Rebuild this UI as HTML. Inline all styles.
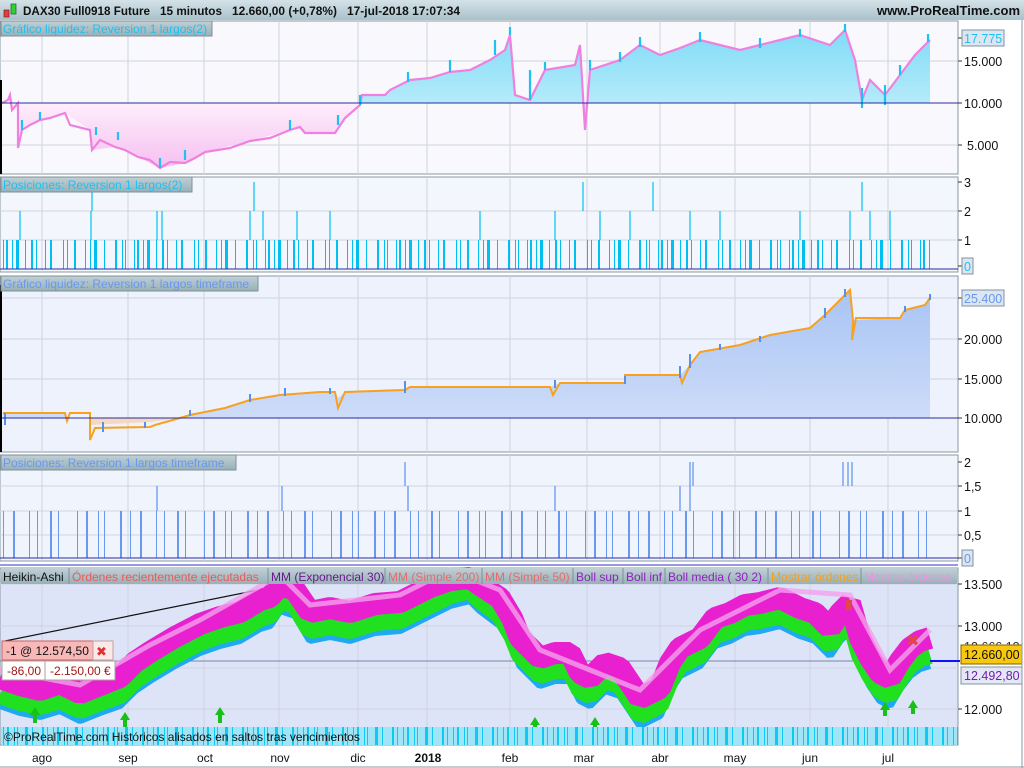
<!DOCTYPE html>
<html><head><meta charset="utf-8"><style>
html,body{margin:0;padding:0;background:#fff;}
svg{display:block;font-family:"Liberation Sans",sans-serif;}
</style></head><body>
<svg width="1024" height="768" viewBox="0 0 1024 768" xmlns="http://www.w3.org/2000/svg">
<defs>
<linearGradient id="tb" x1="0" y1="0" x2="0" y2="1"><stop offset="0" stop-color="#d4e2e8"/><stop offset="1" stop-color="#a9c1cb"/></linearGradient>
<linearGradient id="hd" x1="0" y1="0" x2="0" y2="1"><stop offset="0" stop-color="#c0d0d6"/><stop offset="1" stop-color="#98b0b8"/></linearGradient>
<linearGradient id="cy" x1="0" y1="0" x2="0" y2="1"><stop offset="0" stop-color="#80dcf6"/><stop offset="1" stop-color="#c8f0fc"/></linearGradient>
<linearGradient id="pk" x1="0" y1="0" x2="0" y2="1"><stop offset="0" stop-color="#fdeefc"/><stop offset="1" stop-color="#f6c0f0"/></linearGradient>
<linearGradient id="bl" x1="0" y1="0" x2="0" y2="1"><stop offset="0" stop-color="#a8c4f4"/><stop offset="1" stop-color="#cddcf8"/></linearGradient>
</defs>
<rect width="1024" height="768" fill="#ffffff"/>
<!-- top bar -->
<rect x="0" y="0" width="1024" height="20" fill="url(#tb)"/>
<rect x="4" y="10" width="5" height="7" fill="#e04040" stroke="#802020" stroke-width="0.7"/>
<rect x="11" y="4" width="5" height="10" fill="#30d030" stroke="#206020" stroke-width="0.7"/>
<g font-size="12" font-weight="bold" fill="#111">
<text x="23" y="15" textLength="127" lengthAdjust="spacingAndGlyphs">DAX30 Full0918 Future</text>
<text x="160" y="15" textLength="62" lengthAdjust="spacingAndGlyphs">15 minutos</text>
<text x="232" y="15" textLength="105" lengthAdjust="spacingAndGlyphs">12.660,00 (+0,78%)</text>
<text x="347" y="15" textLength="113" lengthAdjust="spacingAndGlyphs">17-jul-2018 17:07:34</text>
</g>
<text x="1020" y="15" font-size="13" font-weight="bold" fill="#111" text-anchor="end">www.ProRealTime.com</text>

<!-- panel backgrounds -->
<rect x="0" y="21" width="958" height="153" fill="#f9f9fd" stroke="#8898a4"/>
<rect x="0" y="177" width="958" height="95" fill="#f4f6fd" stroke="#8898a4"/>
<rect x="0" y="276" width="958" height="176" fill="#eef2fd" stroke="#8898a4"/>
<rect x="0" y="455" width="958" height="106" fill="#f0f4fd" stroke="#8898a4"/>
<rect x="0" y="568" width="958" height="177" fill="#dde4f8" stroke="#8898a4"/>
<line x1="0" y1="565" x2="958" y2="565" stroke="#3030d0"/>

<!-- vertical grid -->
<g stroke="#cfd3e0" stroke-width="1">
<path d="M42 21V174M128 21V174M204 21V174M279 21V174M358 21V174M427 21V174M510 21V174M587 21V174M660 21V174M735 21V174M810 21V174M888 21V174"/>
<path d="M42 177V272M128 177V272M204 177V272M279 177V272M358 177V272M427 177V272M510 177V272M587 177V272M660 177V272M735 177V272M810 177V272M888 177V272"/>
<path d="M42 276V452M128 276V452M204 276V452M279 276V452M358 276V452M427 276V452M510 276V452M587 276V452M660 276V452M735 276V452M810 276V452M888 276V452"/>
<path d="M42 455V561M128 455V561M204 455V561M279 455V561M358 455V561M427 455V561M510 455V561M587 455V561M660 455V561M735 455V561M810 455V561M888 455V561"/>
<path d="M42 568V745M128 568V745M204 568V745M279 568V745M358 568V745M427 568V745M510 568V745M587 568V745M660 568V745M735 568V745M810 568V745M888 568V745"/>
<path d="M0 61H958M0 145H958M0 211H958M0 240H958M0 339H958M0 379H958M0 298H958M0 486H958M0 511H958M0 535H958M0 584H958M0 626H958M0 709H958M0 668H958"/>
</g>

<!-- panel 1 -->
<path d="M2 103L8 103L18 103L18 148L22 130L40 120L65 113L90 130L92 150L115 147L138 157L160 168L185 163L205 152L250 141L290 130L300 127L305 133L335 133L345 118L360 105L362 103Z" fill="url(#pk)"/>
<path d="M362 103L362 95L385 95L390 90L410 80L430 78L450 72L470 70L490 60L505 50L510 35L515 95L530 100L545 70L575 65L580 45L585 130L590 70L620 60L640 45L660 55L700 40L740 50L780 40L800 35L830 45L845 30L855 60L862 100L870 80L885 95L900 75L915 55L930 40L930 103Z" fill="url(#cy)"/>
<polyline fill="none" stroke="#f080e0" stroke-width="2.2" points="2,103 8,100 10,95 12,110 18,103 18,148 22,130 30,125 40,120 50,118 65,113 70,125 90,130 92,150 100,140 115,147 125,150 138,157 150,160 160,168 170,162 185,163 195,158 205,152 230,148 250,141 270,138 290,130 300,127 305,133 335,133 345,118 360,105 362,95 385,95 390,90 410,80 430,78 450,72 470,70 490,60 505,50 510,35 515,95 530,100 545,70 575,65 580,45 585,130 590,70 620,60 640,45 660,55 680,48 700,40 720,45 740,50 760,45 780,40 800,35 830,45 845,30 855,60 862,100 870,80 885,95 900,75 915,55 930,40"/>
<g stroke="#20c0f0" stroke-width="2.2" fill="none"><path d="M22 130v-10M40 120v-8M96 135v-8M118 140v-8M160 168v-10M185 160v-10M290 130v-10M338 125v-10M360 105v-10M408 82v-10M450 72v-12M495 55v-15M510 35v-8M530 100v-30M545 70v-8M590 70v-10M620 62v-10M640 47v-10M700 42v-10M760 48v-10M800 37v-8M845 32v-8M862 108v-20M885 105v-20M900 75v-10M928 42v-8"/></g>
<line x1="0" y1="103" x2="958" y2="103" stroke="#2a2aa0"/>
<line x1="1" y1="80" x2="1" y2="174" stroke="#000" stroke-width="2"/>

<!-- panel 2 bars -->
<line x1="3" y1="254.5" x2="930" y2="254.5" stroke="#00c0f0" stroke-width="29" stroke-dasharray="1 2 2 4 1 3 3 6 1 5 2 3 1 8 1 4 2 11 1 3 1 6 2 9 1 4 1 3 3 7 1 10 2 5 1 2 1 8"/>
<g stroke="#00c0f0" stroke-width="1.2"><path d="M20 240V211M91 240V211M157 240V211M162 240V211M250 240V211M263 240V211M297 240V211M330 240V211M480 240V211M555 240V211M600 240V211M630 240V211M690 240V211M720 240V211M800 240V211M850 240V211M870 240V211M890 240V211M92 211V182M254 211V182M583 211V182M653 211V182M862 211V182"/></g>
<line x1="0" y1="269" x2="958" y2="269" stroke="#2a2aa0"/>

<!-- panel 3 -->
<path d="M3 418L3 413L65 413L65 418Z" fill="#cddcf8"/>
<path d="M90 418L90 425L150 422L180 418Z" fill="#f4d8c0"/>
<path d="M180 418L190 415L225 408L250 400L280 395L320 392L335 392L338 398L345 392L405 390L410 387L550 387L560 383L625 383L625 375L680 375L690 365L700 352L740 345L770 335L810 328L825 315L845 295L850 290L853 320L900 318L905 310L925 305L930 298L930 418Z" fill="url(#bl)"/>
<polyline fill="none" stroke="#f8a020" stroke-width="2" points="3,413 65,413 67,421 70,413 90,413 90,440 95,428 150,427 155,425 180,418 190,415 225,408 250,400 280,395 320,392 335,392 338,408 345,392 405,390 410,387 550,387 553,395 560,383 625,383 625,375 680,375 682,383 690,365 700,352 740,345 770,335 810,328 825,315 845,295 850,290 853,320 852,340 856,318 900,318 905,310 925,305 930,298"/>
<g stroke="#5890e8" stroke-width="2" fill="none"><path d="M5 425v-12M103 432v-10M145 428v-6M190 416v-6M250 402v-8M285 396v-8M330 394v-6M405 393v-12M555 388v-8M625 384v-8M680 378v-12M690 368v-14M720 350v-6M760 342v-6M825 318v-10M845 297v-8M905 312v-6M930 300v-6"/></g>
<line x1="0" y1="418" x2="958" y2="418" stroke="#2a2aa0"/>
<line x1="1" y1="285" x2="1" y2="452" stroke="#000" stroke-width="2"/>

<!-- panel 4 bars -->
<line x1="3" y1="534.5" x2="930" y2="534.5" stroke="#6898f0" stroke-width="47" stroke-dasharray="1 9 2 14 1 7 1 12 2 6 1 18 1 8 2 10 1 5 1 15 2 8"/>
<g stroke="#6898f0" stroke-width="1.3"><path d="M157 511V486M282 511V486M408 511V486M555 511V486M680 511V486M690 511V486M405 486V462M690 486V462M693 486V462M843 486V462M848 486V462M852 486V462"/></g>
<line x1="0" y1="558" x2="958" y2="558" stroke="#2a2aa0"/>

<!-- panel 5 price -->
<line x1="0" y1="661" x2="958" y2="661" stroke="#7888a8"/>
<line x1="5" y1="641" x2="278" y2="586" stroke="#111" stroke-width="1.2"/>
<polyline fill="none" stroke="#20a8f0" stroke-width="8" stroke-linejoin="bevel" points="0,705 20,712 40,716 60,710 80,720 100,712 120,705 135,690 150,680 175,665 200,652 220,645 240,640 260,628 270,625 280,610 295,615 310,640 330,636 350,640 375,632 400,630 420,620 430,615 450,605 470,600 480,610 500,625 512,645 520,665 540,685 555,680 570,680 580,700 590,705 605,690 620,695 640,725 660,715 670,690 680,675 700,665 715,645 730,640 745,632 760,630 780,625 800,635 815,640 830,655 840,640 850,630 860,665 870,685 880,700 890,705 900,688 910,675 920,668 930,665"/>
<polyline fill="none" stroke="#20e020" stroke-width="18" stroke-linejoin="bevel" points="0,695 20,702 40,706 60,700 80,710 100,702 120,695 135,680 150,670 175,655 200,642 220,635 240,630 260,618 270,615 280,600 295,605 310,630 330,626 350,630 375,622 400,620 420,610 430,605 450,595 470,590 480,600 500,615 512,635 520,655 540,675 555,670 570,670 580,690 590,695 605,680 620,685 640,715 660,705 670,680 680,665 700,655 715,635 730,630 745,622 760,620 780,615 800,625 815,630 830,645 840,630 850,620 860,655 870,675 880,690 890,695 900,678 910,665 920,658 930,655"/>
<polyline fill="none" stroke="#e820d0" stroke-width="22" stroke-linejoin="bevel" points="0,678 20,685 40,690 60,683 80,693 100,685 120,677 135,662 150,652 175,637 200,624 220,617 240,612 260,600 270,597 280,585 295,590 310,612 330,608 350,612 375,604 400,602 420,592 430,587 450,580 470,578 480,585 500,598 512,618 520,638 540,658 555,653 570,653 580,673 590,678 605,663 620,668 640,698 660,688 670,663 680,648 700,638 715,618 730,613 745,605 760,603 780,598 800,608 815,613 830,628 840,613 850,603 860,638 870,658 880,673 890,678 900,661 910,648 920,641 930,638"/>
<polyline fill="none" stroke="#f4a0ec" stroke-width="5" opacity="0.8" points="0,670 80,685 150,645 200,620 280,575 310,605 400,595 450,570 500,590 540,650 590,670 640,690 700,630 780,590 850,595 890,670 930,630"/>
<g fill="#18c018"><path d="M30 715l5 -8 5 8h-3v8h-4v-8z"/><path d="M120 720l5 -8 5 8h-3v8h-4v-8z"/><path d="M215 715l5 -8 5 8h-3v8h-4v-8z"/><path d="M530 725l5 -8 5 8h-3v8h-4v-8z"/><path d="M590 725l5 -8 5 8h-3v8h-4v-8z"/><path d="M908 708l5 -8 5 8h-3v6h-4v-6z"/><path d="M880 710l5 -8 5 8h-3v6h-4v-6z"/></g>
<text x="906" y="646" font-size="16" fill="#e04848">✖</text>
<rect x="846" y="600" width="6" height="10" fill="#e04848"/>

<!-- bottom strip -->
<rect x="1" y="727" width="957" height="18" fill="#a0e4f8"/>
<line x1="3" y1="736" x2="958" y2="736" stroke="#10c8f0" stroke-width="18" stroke-dasharray="1 3 2 5 1 2 1 7 3 4 1 9 2 3 1 5"/>
<text x="4" y="741" font-size="12" fill="#111">©ProRealTime.com  Históricos alisados en saltos tras vencimientos</text>

<!-- headers -->
<rect x="1" y="21" width="211" height="15" fill="url(#hd)" stroke="#809098"/>
<text x="3" y="33" font-size="12" fill="#20c0f0">Gráfico liquidez: Reversion 1 largos(2)</text>
<rect x="1" y="177" width="191" height="15" fill="url(#hd)" stroke="#809098"/>
<text x="3" y="189" font-size="12" fill="#20c0f0">Posiciones: Reversion 1 largos(2)</text>
<rect x="1" y="276" width="257" height="15" fill="url(#hd)" stroke="#809098"/>
<text x="3" y="288" font-size="12" fill="#6898f0">Gráfico liquidez: Reversion 1 largos timeframe</text>
<rect x="1" y="455" width="235" height="15" fill="url(#hd)" stroke="#809098"/>
<text x="3" y="467" font-size="12" fill="#6898f0">Posiciones: Reversion 1 largos timeframe</text>
<rect x="1" y="568" width="956" height="16" fill="url(#hd)"/>
<g font-size="12">
<text x="3" y="581" fill="#111">Heikin-Ashi</text><line x1="69" y1="568" x2="69" y2="584" stroke="#809098"/>
<text x="72" y="581" fill="#e85a5a">Órdenes recientemente ejecutadas</text><line x1="268" y1="568" x2="268" y2="584" stroke="#809098"/>
<text x="271" y="581" fill="#6a1a8a">MM (Exponencial 30)</text><line x1="385" y1="568" x2="385" y2="584" stroke="#809098"/>
<text x="388" y="581" fill="#e86a6a">MM (Simple 200)</text><line x1="482" y1="568" x2="482" y2="584" stroke="#809098"/>
<text x="485" y="581" fill="#e86a6a">MM (Simple 50)</text><line x1="573" y1="568" x2="573" y2="584" stroke="#809098"/>
<text x="576" y="581" fill="#9020c0">Boll sup</text><line x1="623" y1="568" x2="623" y2="584" stroke="#809098"/>
<text x="626" y="581" fill="#9020c0">Boll inf</text><line x1="665" y1="568" x2="665" y2="584" stroke="#809098"/>
<text x="668" y="581" fill="#9020c0">Boll media ( 30 2)</text><line x1="768" y1="568" x2="768" y2="584" stroke="#809098"/>
<text x="771" y="581" fill="#f0a020">Mostrar órdenes</text><line x1="861" y1="568" x2="861" y2="584" stroke="#809098"/>
<text x="864" y="581" fill="#f090e0">Mostrar órdenes</text>
</g>

<!-- order boxes -->
<rect x="2" y="641" width="91" height="19" fill="#f8b8b8" stroke="#d06060"/>
<text x="6" y="655" font-size="12" fill="#111">-1 @ 12.574,50</text>
<rect x="93" y="641" width="20" height="19" fill="#fbe8e8" stroke="#c0a0a0"/>
<text x="96" y="656" font-size="13" fill="#e03030">✖</text>
<rect x="2" y="661" width="43" height="19" fill="#fff" stroke="#b0a0a0"/>
<text x="7" y="675" font-size="12" fill="#a01818">-86,00</text>
<rect x="45" y="661" width="70" height="19" fill="#fff" stroke="#b0a0a0"/>
<text x="50" y="675" font-size="12" fill="#a01818">-2.150,00 €</text>

<!-- right axis -->
<g stroke="#333"><path d="M958 38h4M958 61h4M958 103h4M958 145h4M958 182h4M958 211h4M958 240h4M958 266h4M958 298h4M958 339h4M958 379h4M958 418h4M958 462h4M958 486h4M958 511h4M958 535h4M958 558h4M958 584h4M958 626h4M958 709h4"/></g>
<g font-size="12.5" fill="#111">
<text x="964" y="66">15.000</text><text x="964" y="108">10.000</text><text x="967" y="150">5.000</text>
<text x="964" y="187">3</text><text x="964" y="216">2</text><text x="964" y="245">1</text>
<text x="964" y="344">20.000</text><text x="964" y="384">15.000</text><text x="964" y="423">10.000</text>
<text x="964" y="467">2</text><text x="964" y="491">1,5</text><text x="964" y="516">1</text><text x="964" y="540">0,5</text>
<text x="964" y="589">13.500</text><text x="964" y="631">13.000</text><text x="964" y="714">12.000</text>
</g>
<rect x="962" y="30" width="42" height="16" fill="#dce6f0" stroke="#8090a0"/>
<text x="964" y="43" font-size="12.5" fill="#20c0f0">17.775</text>
<rect x="962" y="258" width="11" height="16" fill="#dce6f0" stroke="#8090a0"/>
<text x="964" y="271" font-size="12.5" fill="#20c0f0">0</text>
<rect x="962" y="290" width="42" height="16" fill="#dce6f0" stroke="#8090a0"/>
<text x="964" y="303" font-size="12.5" fill="#6898f0">25.400</text>
<rect x="962" y="550" width="11" height="16" fill="#dce6f0" stroke="#8090a0"/>
<text x="964" y="563" font-size="12.5" fill="#6898f0">0</text>
<text x="964" y="651" font-size="12.5" fill="#333">12.666,13</text>
<line x1="930" y1="661" x2="960" y2="661" stroke="#1010ff" stroke-width="2"/>
<rect x="961" y="645" width="61" height="19" fill="#f8c810" stroke="#806000"/>
<text x="964" y="659" font-size="12.5" fill="#111">12.660,00</text>
<rect x="961" y="667" width="61" height="17" fill="#e4e8f4" stroke="#8090a0"/>
<text x="964" y="680" font-size="12.5" fill="#7020b0">12.492,80</text>
<line x1="1022" y1="20" x2="1022" y2="768" stroke="#8898a4"/>

<!-- date axis -->
<g font-size="12" fill="#111" text-anchor="middle">
<text x="42" y="762">ago</text><text x="128" y="762">sep</text><text x="205" y="762">oct</text><text x="280" y="762">nov</text><text x="358" y="762">dic</text>
<text x="428" y="762" font-weight="bold">2018</text><text x="510" y="762">feb</text><text x="584" y="762">mar</text><text x="660" y="762">abr</text><text x="735" y="762">may</text><text x="810" y="762">jun</text><text x="888" y="762">jul</text>
</g>
<line x1="0" y1="767" x2="1024" y2="767" stroke="#8898a4"/>
</svg>
</body></html>
